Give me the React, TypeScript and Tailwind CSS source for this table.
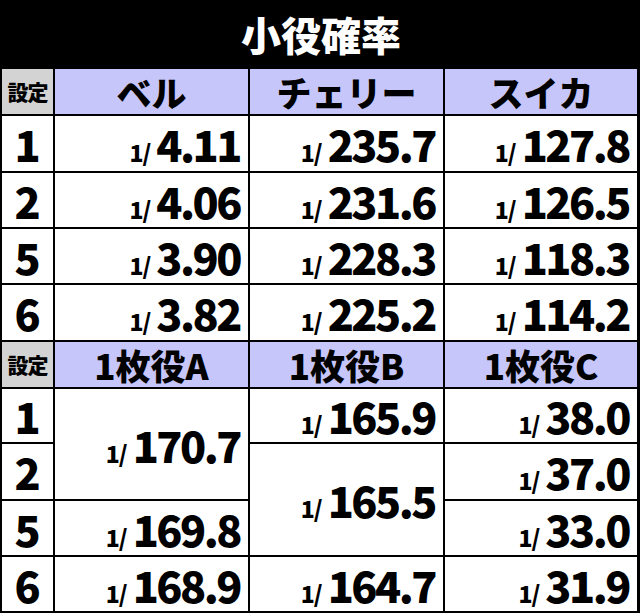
const jp = { fontFamily: '"Noto Sans CJK JP", "Noto Sans", sans-serif' };

type Cell = { v: string; span?: boolean };

const top: { s: string; vals: string[] }[] = [
  { s: "1", vals: ["4.11", "235.7", "127.8"] },
  { s: "2", vals: ["4.06", "231.6", "126.5"] },
  { s: "5", vals: ["3.90", "228.3", "118.3"] },
  { s: "6", vals: ["3.82", "225.2", "114.2"] },
];

// lower table: cells listed in flow order, spans occupy two rows
const bottom: { s: string; cells: Cell[] }[] = [
  { s: "1", cells: [{ v: "170.7", span: true }, { v: "165.9" }, { v: "38.0" }] },
  { s: "2", cells: [{ v: "165.5", span: true }, { v: "37.0" }] },
  { s: "5", cells: [{ v: "169.8" }, { v: "33.0" }] },
  { s: "6", cells: [{ v: "168.9" }, { v: "164.7" }, { v: "31.9" }] },
];

function Value({ v, span }: Cell) {
  return (
    <div className={`bg-white flex items-center justify-end pr-[6px] ${span ? "row-span-2" : ""}`}>
      <span className="flex items-baseline font-black text-black leading-none">
        <span className="text-[23px] tracking-[-1px] mr-[6px]">1/</span>
        <span className="text-[43px] tracking-[-2.5px] pr-[2px]">{v}</span>
      </span>
    </div>
  );
}

function Setting({ s }: { s: string }) {
  return (
    <div className="bg-white flex items-center justify-center">
      <span className="text-[43px] font-black leading-none">{s}</span>
    </div>
  );
}

function Header({ labels }: { labels: string[] }) {
  return (
    <>
      <div className="bg-[#d3d3d3] flex items-center justify-center">
        <span className="text-[21px] font-black leading-none tracking-[-1px]">設定</span>
      </div>
      {labels.map((l) => (
        <div key={l} className="bg-[#c6c6fb] flex items-center justify-center">
          <span className="text-[35px] font-black leading-none">{l}</span>
        </div>
      ))}
    </>
  );
}

export default function App() {
  return (
    <div className="w-[640px] h-[615px] bg-white text-black" style={jp}>
      <div className="h-[68px] bg-black flex items-center justify-center">
        <h1 className="text-[40px] font-black text-white leading-none pl-[2px]">小役確率</h1>
      </div>
      <div className="grid grid-cols-[51px_193px_193px_192px] grid-rows-[45px_55px_54px_54px_55px_45px_53px_55px_54px_54px] gap-[2px] bg-black pl-[2px] pr-[3px] pt-[1px] pb-[2px]">
        <Header labels={["ベル", "チェリー", "スイカ"]} />
        {top.map((r) => (
          <div key={r.s} className="contents">
            <Setting s={r.s} />
            {r.vals.map((v, i) => (
              <Value key={i} v={v} />
            ))}
          </div>
        ))}
        <Header labels={["1枚役A", "1枚役B", "1枚役C"]} />
        {bottom.map((r) => (
          <div key={r.s} className="contents">
            <Setting s={r.s} />
            {r.cells.map((c, i) => (
              <Value key={i} v={c.v} span={c.span} />
            ))}
          </div>
        ))}
      </div>
    </div>
  );
}
